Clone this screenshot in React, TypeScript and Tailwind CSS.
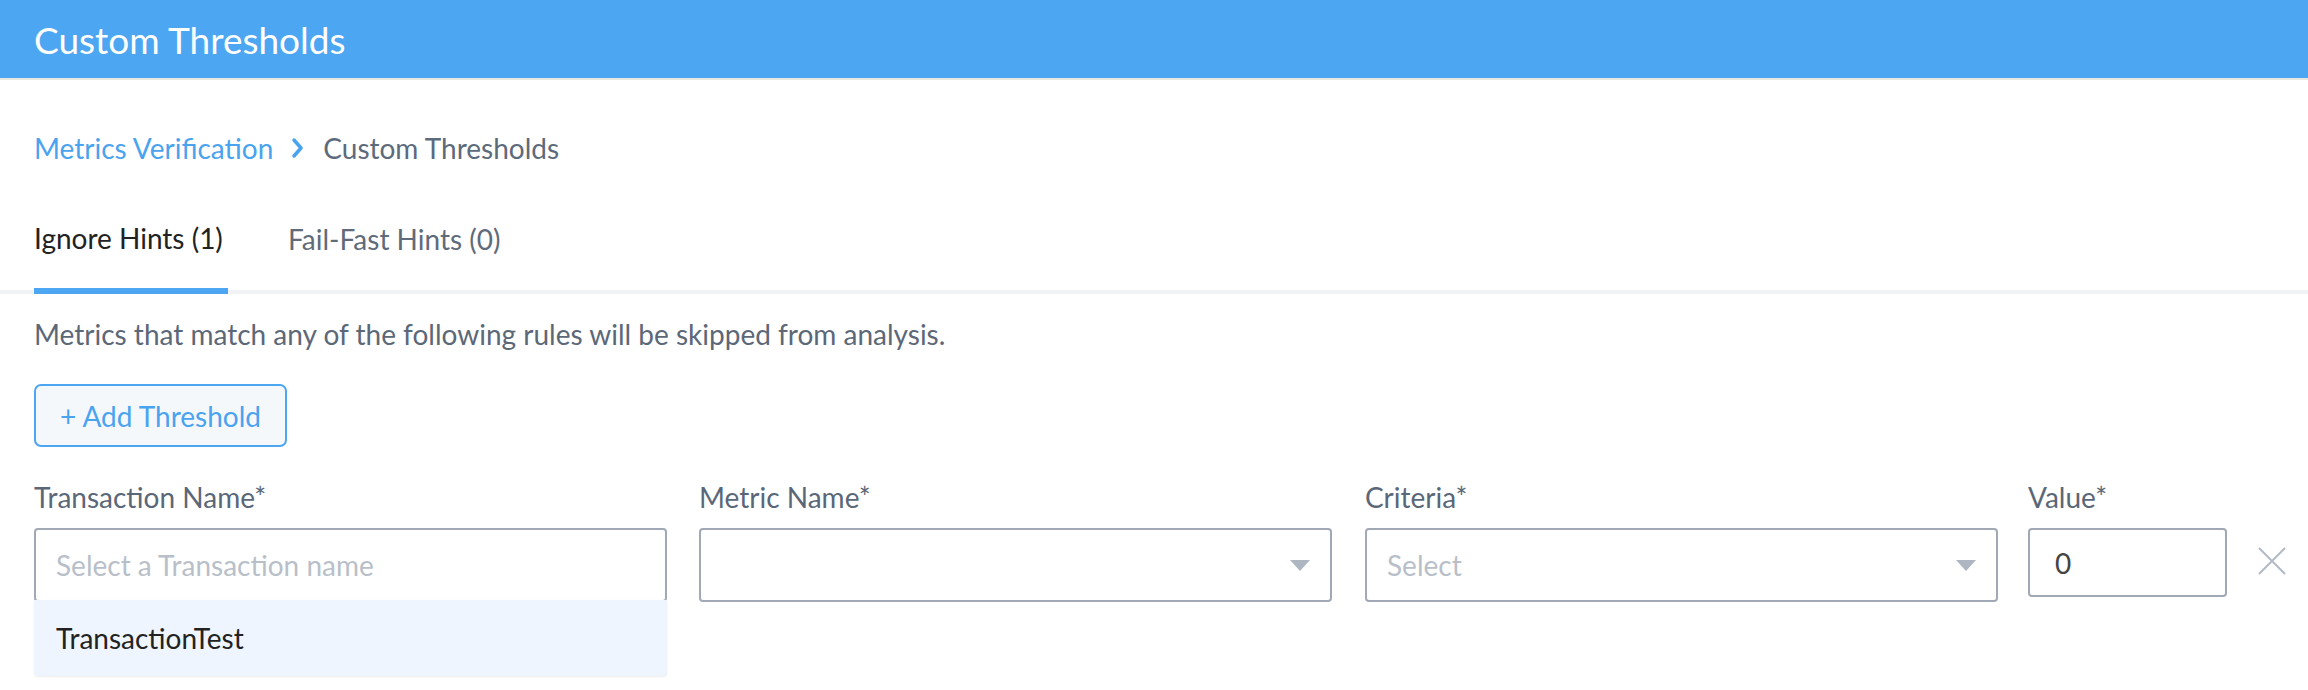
const font = "font-['Lato','Noto_Sans',sans-serif]";

function Caret() {
  return (
    <svg width="20" height="11" viewBox="0 0 20 11" className="shrink-0">
      <path d="M0 0 L20 0 L10 11 Z" fill="#aeb6c1" />
    </svg>
  );
}

function CloseIcon() {
  return (
    <svg width="28" height="28" viewBox="0 0 28 28">
      <path d="M1 1 L27 27 M27 1 L1 27" stroke="#b2bac4" strokeWidth="2" fill="none" />
    </svg>
  );
}

export default function App() {
  return (
    <main className={`min-h-screen w-[2308px] bg-white ${font}`}>
      <header className="flex h-[78px] items-center bg-[#4ca6f2] px-[34px]">
        <h1 className="text-[37px] leading-none text-white">Custom Thresholds</h1>
      </header>
      <div className="h-[2px] bg-[#ebe7e2]" />

      <div className="px-[34px]">
        <nav className="mt-[50px] flex h-[36px] items-center text-[28px] leading-[36px]">
          <a className="text-[#4aa3ef]">Metrics Verification</a>
          <svg width="14" height="22" viewBox="0 0 14 22" className="mx-[18px]">
            <path d="M3 3 L10 11 L3 19" stroke="#4aa3ef" strokeWidth="3.5" fill="none" strokeLinecap="round" strokeLinejoin="round" />
          </svg>
          <span className="text-[#5d6a7b]">Custom Thresholds</span>
        </nav>
      </div>

      <div className="mt-[54px] flex border-b-4 border-[#f1f2f4] pl-[34px]">
        <button className="-mb-[4px] w-[194px] shrink-0 border-b-[6px] border-[#4ca6f2] pb-[32px] text-left text-[28px] leading-[36px] text-[#222222]">
          Ignore Hints (1)
        </button>
        <button className="ml-[60px] pb-[32px] text-left text-[28px] leading-[36px] text-[#5f6b7a]">
          Fail-Fast Hints (0)
        </button>
      </div>

      <div className="px-[34px]">
        <p className="mt-[22px] text-[28px] leading-[36px] text-[#5c6878]">
          Metrics that match any of the following rules will be skipped from analysis.
        </p>

        <button className="mt-[32px] flex h-[63px] w-[253px] items-center justify-center rounded-[7px] border-2 border-[#4ca6f2] bg-[#f5f8fb] text-[28px] text-[#4aa3ef]">
          + Add Threshold
        </button>

        <div className="mt-[32px] flex">
          <div className="w-[633px] shrink-0">
            <label className="block text-[28px] leading-[36px] text-[#5a6778]">Transaction Name*</label>
            <div className="relative mt-[13px]">
              <div className="flex h-[74px] items-center rounded-[4px] border-2 border-[#a0a9b5] px-[20px]">
                <span className="text-[28px] text-[#b8bfc9]">Select a Transaction name</span>
              </div>
              <div className="absolute left-0 right-0 top-[72px] flex h-[76px] items-center rounded-b-[4px] bg-[#eef5fe] px-[22px] shadow-[0_1px_2px_rgba(0,0,0,0.08)]">
                <span className="text-[28px] text-[#222222]">TransactionTest</span>
              </div>
            </div>
          </div>

          <div className="ml-[32px] w-[633px] shrink-0">
            <label className="block text-[28px] leading-[36px] text-[#5a6778]">Metric Name*</label>
            <div className="mt-[13px] flex h-[74px] items-center justify-end rounded-[4px] border-2 border-[#a0a9b5] px-[20px]">
              <Caret />
            </div>
          </div>

          <div className="ml-[33px] w-[633px] shrink-0">
            <label className="block text-[28px] leading-[36px] text-[#5a6778]">Criteria*</label>
            <div className="mt-[13px] flex h-[74px] items-center justify-between rounded-[4px] border-2 border-[#a0a9b5] pl-[20px] pr-[20px]">
              <span className="text-[28px] text-[#b8bfc9]">Select</span>
              <Caret />
            </div>
          </div>

          <div className="ml-[30px] w-[199px] shrink-0">
            <label className="block text-[28px] leading-[36px] text-[#5a6778]">Value*</label>
            <div className="mt-[13px] flex h-[69px] items-center rounded-[4px] border-2 border-[#a0a9b5] px-[25px]">
              <span className="text-[28px] text-[#444444]">0</span>
            </div>
          </div>

          <div className="ml-[31px] mt-[68px] shrink-0">
            <CloseIcon />
          </div>
        </div>
      </div>
    </main>
  );
}
